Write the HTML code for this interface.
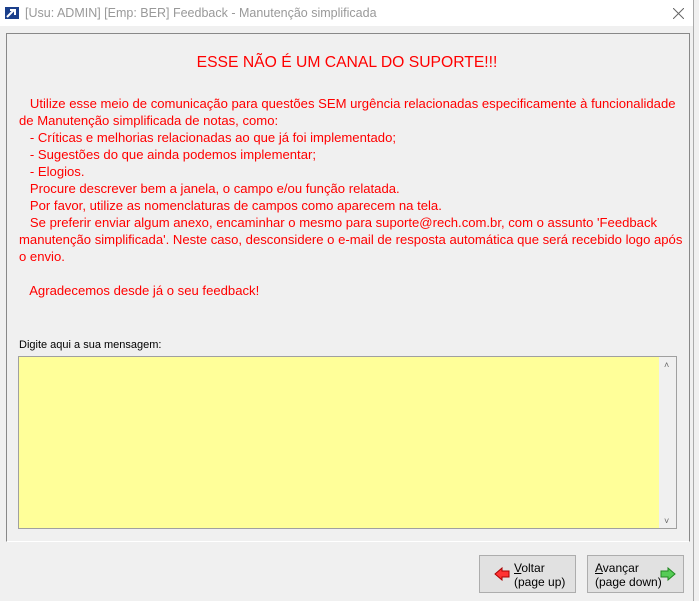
<html><head><style>
body{margin:0;width:699px;height:601px;background:#f0f0f0;font-family:"Liberation Sans",sans-serif;position:relative;overflow:hidden}
.tb{position:absolute;left:0;top:0;width:694px;height:26px;background:#fff}
.tt{position:absolute;left:25px;top:6px;font-size:12.5px;color:#999}
.win{position:absolute;right:0;top:0;width:5px;height:601px;background:#f0f0f0;border-left:1px solid #aaa}
.panel{position:absolute;left:6px;top:33px;width:682px;height:507px;border:1px solid #888;border-bottom-color:#fff}
.red{position:absolute;color:#f00;font-size:13.1px;line-height:17px;white-space:pre}
.ta{position:absolute;left:18px;top:356px;width:657px;height:171px;border:1px solid #a0a0a0;background:#ffff99}
.sb{position:absolute;right:0;top:0;width:17px;height:171px;background:#f0f0f0}
.btn{position:absolute;top:555px;width:95px;height:36px;border:1px solid #adadad;background:#e1e1e1;font-size:12px;line-height:14px;color:#000}
</style></head><body>
<div class="tb">
<svg style="position:absolute;left:5px;top:7px" width="14" height="12"><rect width="14" height="12" fill="#1b3f8b"/><path d="M2 10 L9 3 M5 3 H10 V8" stroke="#fff" stroke-width="2" fill="none"/></svg>
<div class="tt">[Usu: ADMIN] [Emp: BER] Feedback - Manutenção simplificada</div>
<svg style="position:absolute;left:673px;top:8px" width="11" height="11"><path d="M0 0L11 11M11 0L0 11" stroke="#666" stroke-width="1"/></svg>
</div>
<div class="panel"></div>
<div class="red" style="left:0;width:694px;top:54px;text-align:center;font-size:15.7px;white-space:normal">ESSE NÃO É UM CANAL DO SUPORTE!!!</div>
<div class="red" style="left:19px;top:95px">   Utilize esse meio de comunicação para questões SEM urgência relacionadas especificamente à funcionalidade
de Manutenção simplificada de notas, como:
   - Críticas e melhorias relacionadas ao que já foi implementado;
   - Sugestões do que ainda podemos implementar;
   - Elogios.
   Procure descrever bem a janela, o campo e/ou função relatada.
   Por favor, utilize as nomenclaturas de campos como aparecem na tela.
   Se preferir enviar algum anexo, encaminhar o mesmo para suporte@rech.com.br, com o assunto 'Feedback
manutenção simplificada'. Neste caso, desconsidere o e-mail de resposta automática que será recebido logo após
o envio.

   Agradecemos desde já o seu feedback!</div>
<div style="position:absolute;left:19px;top:339px;font-size:11px;color:#000">Digite aqui a sua mensagem:</div>
<div class="ta"><div class="sb"><div style="position:absolute;left:5px;top:3px;font-size:9px;color:#666">˄</div><div style="position:absolute;left:5px;bottom:2px;font-size:9px;color:#666">˅</div></div></div>
<div class="btn" style="left:479px"><svg style="position:absolute;left:14px;top:11px" width="16" height="14"><path d="M1 7L8 1V4H15V10H8V13Z" fill="#f33" stroke="#a00"/></svg><div style="position:absolute;left:34px;top:5px"><u>V</u>oltar<br>(page up)</div></div>
<div class="btn" style="left:587px"><div style="position:absolute;left:7px;top:5px"><u>A</u>vançar<br>(page down)</div><svg style="position:absolute;left:72px;top:11px" width="16" height="14"><path d="M15 7L8 1V4H1V10H8V13Z" fill="#5c5" stroke="#282"/></svg></div>
<div class="win"></div>
</body></html>
